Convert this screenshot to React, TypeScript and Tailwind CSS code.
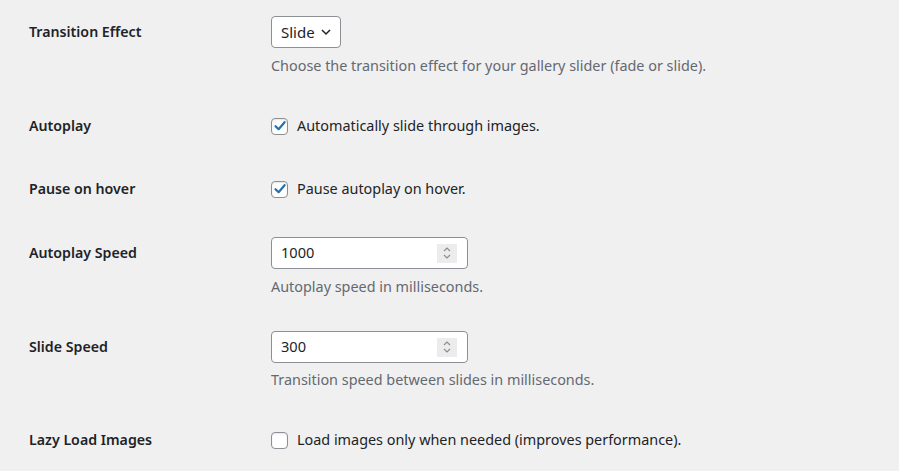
import React from "react";

const font = { fontFamily: '"Noto Sans", "Open Sans", sans-serif' };

function Check({ checked }: { checked: boolean }) {
  return (
    <span className="inline-flex h-[17px] w-[17px] shrink-0 items-center justify-center rounded-[4px] border border-[#8c8f94] bg-white shadow-[inset_0_1px_2px_rgba(0,0,0,0.1)]">
      {checked && (
        <svg width="14" height="14" viewBox="0 0 14 14">
          <path d="M2.5 7.2 L5.6 10.2 L11.6 3.2" fill="none" stroke="#2271b1" strokeWidth="2.2" strokeLinecap="round" strokeLinejoin="round" />
        </svg>
      )}
    </span>
  );
}

function NumberInput({ value }: { value: string }) {
  return (
    <div className="flex h-[32px] w-[197px] items-center justify-between rounded-[4px] border border-[#8c8f94] bg-white pl-[9px] pr-[10px] text-[14.6px] text-[#1d2327]">
      <span>{value}</span>
      <span className="flex h-[19px] w-[20px] items-center justify-center bg-[#ececec]">
        <svg width="10" height="14" viewBox="0 0 10 14">
          <path d="M2 5 L5 2 L8 5" fill="none" stroke="#8a8a8a" strokeWidth="1.1" />
          <path d="M2 9 L5 12 L8 9" fill="none" stroke="#8a8a8a" strokeWidth="1.1" />
        </svg>
      </span>
    </div>
  );
}

function Label({ children }: { children: React.ReactNode }) {
  return <div className="w-[242px] shrink-0 text-[14.2px] font-semibold text-[#1d2327]">{children}</div>;
}

function Desc({ children, mt }: { children: React.ReactNode; mt: string }) {
  return <div className={`${mt} text-[14.4px] leading-[20px] text-[#646970]`}>{children}</div>;
}

export default function App() {
  return (
    <div className="h-[471px] w-[899px] overflow-hidden bg-[#f0f0f1] pl-[29px]" style={font}>
      <div className="flex pt-[16px]">
        <div className="flex h-[32px] items-center">
          <Label>Transition Effect</Label>
        </div>
        <div>
          <div className="flex h-[32px] w-[70px] items-center justify-between rounded-[4px] border border-[#8c8f94] bg-white pl-[9px] pr-[8px] text-[15px] text-[#1d2327]">
            <span>Slide</span>
            <svg width="12" height="12" viewBox="0 0 12 12">
              <path d="M2 4 L6 8 L10 4" fill="none" stroke="#1d2327" strokeWidth="1.5" />
            </svg>
          </div>
          <Desc mt="mt-[8px]">Choose the transition effect for your gallery slider (fade or slide).</Desc>
        </div>
      </div>

      <div className="mt-[40px] flex h-[20px] items-center">
        <Label>Autoplay</Label>
        <div className="flex items-center gap-[9px] text-[14.4px] text-[#1d2327]">
          <Check checked />
          <span>Automatically slide through images.</span>
        </div>
      </div>

      <div className="mt-[43px] flex h-[20px] items-center">
        <Label>Pause on hover</Label>
        <div className="flex items-center gap-[9px] text-[14.4px] text-[#1d2327]">
          <Check checked />
          <span>Pause autoplay on hover.</span>
        </div>
      </div>

      <div className="mt-[38px] flex">
        <div className="flex h-[32px] items-center">
          <Label>Autoplay Speed</Label>
        </div>
        <div>
          <NumberInput value="1000" />
          <Desc mt="mt-[8px]">Autoplay speed in milliseconds.</Desc>
        </div>
      </div>

      <div className="mt-[34px] flex">
        <div className="flex h-[32px] items-center">
          <Label>Slide Speed</Label>
        </div>
        <div>
          <NumberInput value="300" />
          <Desc mt="mt-[7px]">Transition speed between slides in milliseconds.</Desc>
        </div>
      </div>

      <div className="mt-[40px] flex h-[20px] items-center">
        <Label>Lazy Load Images</Label>
        <div className="flex items-center gap-[9px] text-[14.4px] text-[#1d2327]">
          <Check checked={false} />
          <span>Load images only when needed (improves performance).</span>
        </div>
      </div>
    </div>
  );
}
